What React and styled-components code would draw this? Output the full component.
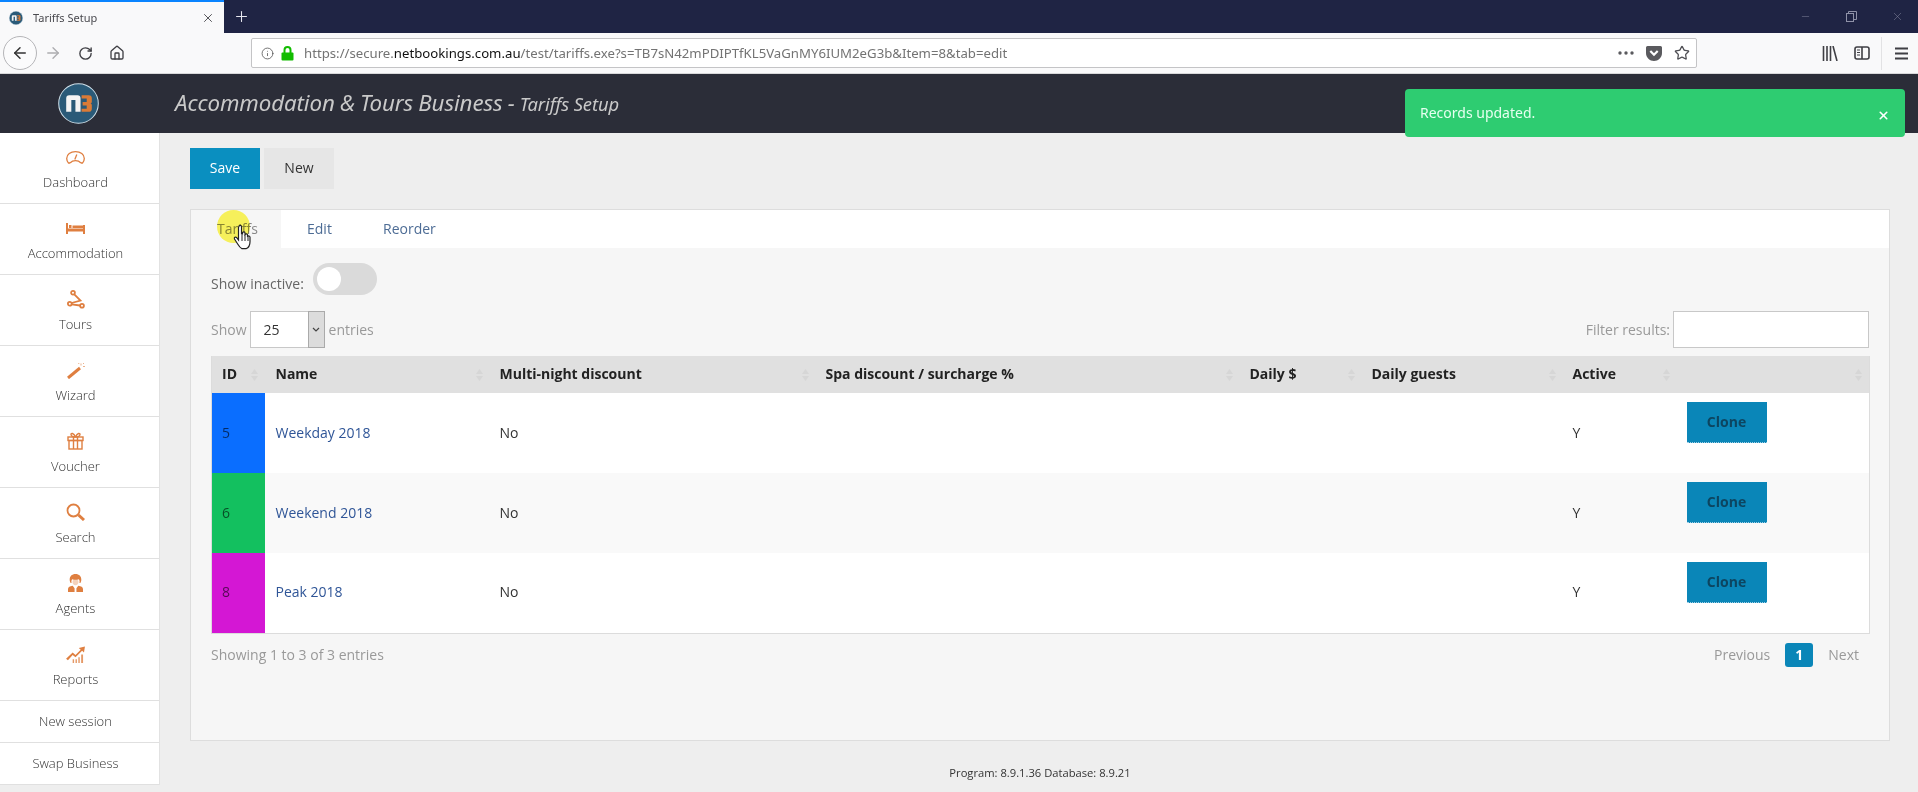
import React from 'react';
import styled, { createGlobalStyle } from 'styled-components';
import { ArrowLeft, ArrowRight, RotateCw, Home, Info, Plus, X, Minus, Star } from 'lucide-react';

const Global = createGlobalStyle`
  html, body { margin: 0; padding: 0; height: 792px; overflow: hidden; background: #eeeeee; }
  body { font-family: "Open Sans", "Liberation Sans", sans-serif; font-size: 14px; color: #333; }
  * { box-sizing: border-box; }
`;

const Page = styled.div`position: relative; width: 1918px; height: 792px; overflow: hidden; display: flex; flex-direction: column;`;

/* Browser chrome */
const TabStrip = styled.div`height: 33px; background: #1f2444; display: flex; align-items: stretch; color: #fff; flex: none;`;
const BrowserTab = styled.div`
  width: 224px; background: #f9f9fa; border-top: 2px solid #0a84ff; display: flex; align-items: center;
  padding: 0 9px 0 9px; gap: 10px; font-size: 11px; color: #4a4a4f;
  font-family: "Noto Sans", sans-serif;
`;
const TabTitle = styled.span`flex: 1;`;
const NewTab = styled.div`width: 34px; display: flex; align-items: center; justify-content: center; color: #e6e7ef;`;
const WindowControls = styled.div`margin-left: auto; margin-right: -2px; display: flex; align-items: center; color: #8f92a8;`;
const WindowBtn = styled.div`width: 46px; height: 33px; display: flex; align-items: center; justify-content: center;`;
const NavBar = styled.div`
  height: 41px; background: #f9f9fa; border-bottom: 1px solid #d8d8da; display: flex; align-items: center; flex: none; color: #4a4a4f; padding-left: 3px;
`;
const BackCircle = styled.div`
  width: 34px; height: 34px; border: 1px solid #b5b5b8; border-radius: 50%; display: flex; align-items: center; justify-content: center; color: #333; background: #fbfbfc;
`;
const NavBtn = styled.div`width: 32px; flex: none; display: flex; align-items: center; justify-content: center; color: ${p => p.$off ? '#adadb0' : '#3f3f44'};`;
const UrlBar = styled.div`
  width: 1446px; height: 30px; margin-left: 118px; background: #fff; border: 1px solid #c4c4c6; border-radius: 2px; flex: none;
  display: flex; align-items: center; gap: 7px; padding: 0 6px 0 9px; font-size: 13.2px; color: #737373; font-family: "Noto Sans", sans-serif;
`;
const UrlText = styled.span`flex: 1; margin-left: 3px; white-space: nowrap; b { font-weight: 400; color: #111; }`;
const UrlAction = styled.span`display: flex; margin-left: 5px; color: #4f4f54;`;
const LibrarySlot = styled.div`margin-left: 117px;`;
const ToolSep = styled.div`width: 1px; height: 33px; background: #e2e2e4; margin: 0 3px; flex: none;`;

/* Application */
const AppHeader = styled.header`height: 59px; background: #2b2d38; display: flex; align-items: center; flex: none;`;
const LogoCell = styled.div`width: 175px; padding-left: 58px; display: flex; align-items: center;`;
const Title = styled.h1`
  margin: 0 0 2px; font-weight: 400; font-style: italic; font-size: 22.3px; color: #c9c9c9; letter-spacing: -0.1px;
  font-family: "Noto Sans", "Open Sans", sans-serif; word-spacing: -0.5px;
`;
const SubTitle = styled.span`font-size: 18.4px; word-spacing: 0;`;
const Body = styled.div`flex: 1; display: flex; align-items: flex-start; min-height: 0;`;
const Sidebar = styled.nav`width: 160px; background: #fff; border-right: 1px solid #e2e2e2; flex: none;`;
const SideItem = styled.div`
  height: ${p => p.$small ? 42 : 71}px; border-bottom: 1px solid #e0e0e0; display: flex; flex-direction: column; align-items: center;
  justify-content: ${p => p.$small ? 'center' : 'flex-start'}; padding: ${p => p.$small ? '0 8px 2px 0' : '13px 8px 0 0'};
  font-size: 13px; font-weight: 300; color: #333; line-height: 18px;
`;
const SideIcon = styled.div`height: 22px; width: 24px; display: flex; align-items: center; justify-content: center; margin-bottom: 5px; color: #df7f40;`;

const Main = styled.main`flex: 1; padding: 15px 28px 0 30px; min-width: 0;`;
const ActionRow = styled.div`display: flex; gap: 4px; margin-bottom: 20px;`;
const ActionBtn = styled.button`
  width: 70px; height: 41px; border: 0; font: inherit; font-size: 14px; padding: 0 0 2px;
  background: ${p => p.$primary ? '#0a8fc0' : '#e6e6e6'}; color: ${p => p.$primary ? '#fff' : '#333'};
`;
const Panel = styled.section`height: 532px; background: #f6f6f6; border: 1px solid #dddddd;`;
const TabsBar = styled.div`height: 38px; background: #fff; display: flex; align-items: stretch;`;
const PanelTab = styled.div`
  display: flex; align-items: center; padding: 0 0 2px 26px; width: ${p => p.$w}px; font-size: 14px; font-weight: 400;
  background: ${p => p.$active ? '#f6f6f6' : '#fff'}; color: ${p => p.$active ? '#888' : '#4d6c95'};
`;
const PanelBody = styled.div`padding: 15px 20px 0 20px;`;
const InactiveRow = styled.div`height: 32px; display: flex; align-items: flex-start; gap: 9px; color: #666; font-size: 14px; margin-bottom: 16px;`;
const InactiveLabel = styled.span`padding-top: 11px; line-height: 20px;`;
const Toggle = styled.div`width: 64px; height: 32px; border-radius: 16px; background: #dadada; padding: 4px; display: flex;`;
const Knob = styled.div`width: 24px; height: 24px; border-radius: 50%; background: #fff;`;
const ControlRow = styled.div`display: flex; align-items: center; justify-content: space-between; height: 37px; margin-bottom: 8px; color: #999; font-size: 14px;`;
const LengthGroup = styled.div`display: flex; align-items: center; gap: 3px;`;
const EntriesLabel = styled.span`margin-left: 1px;`;
const FilterGroup = styled.div`display: flex; align-items: center; gap: 3px;`;
const SelectBox = styled.div`
  width: 75px; height: 37px; border: 1px solid #c8c8c8; background: #fff; color: #333; display: flex; align-items: center; padding-left: 13px; position: relative;
`;
const SelectArrow = styled.div`
  position: absolute; right: -1px; top: -1px; bottom: -1px; width: 17px; background: #dcdcdc; border: 1px solid #aaa; display: flex; align-items: center; justify-content: center; color: #444;
`;
const FilterInput = styled.div`width: 196px; height: 37px; border: 1px solid #c8c8c8; background: #fff;`;

const Table = styled.table`
  width: 1658px; border-collapse: collapse; table-layout: fixed; border: 1px solid #dcdcdc; border-top: 0; font-size: 14px;
  th:nth-child(2), td:nth-child(2) { padding-left: 11px; }
`;
const Th = styled.th`
  height: 37px; background: #e0e0e0; text-align: left; font-weight: 700; color: #222; padding: 0 0 2px 10px; position: relative; font-size: 14px;
`;
const SortMark = styled.svg`position: absolute; right: 7px; top: 13px; width: 7px; height: 12px; color: #d6d6d6;`;
const Row = styled.tr`height: 80px; background: ${p => p.$alt ? '#f9f9f9' : '#fff'};`;
const Td = styled.td`padding: 0 0 2px 10px; color: #333; vertical-align: middle; overflow: hidden;`;
const ColorCell = styled.td`padding: 0 0 2px 10px; background: ${p => p.$c}; color: rgba(0,0,0,.6);`;
const NameLink = styled.a`color: #2f5597; text-decoration: none;`;
const CloneCell = styled.td`padding: 9px 0 0 10px; vertical-align: top;`;
const CloneBtn = styled.button`
  width: 80px; height: 41px; border: 0; padding: 0 0 2px; background: #0a86b8; color: #0d4560; font: inherit; font-weight: 700; font-size: 14px;
  border-bottom: 1px dotted #9fd0e6;
`;
const TableFoot = styled.div`display: flex; justify-content: space-between; align-items: center; height: 24px; margin-top: 9px; color: #999; font-size: 14px;`;
const Pager = styled.div`display: flex; align-items: center; margin-right: 10px;`;
const PageCurrent = styled.span`
  width: 28px; height: 24px; background: #0a86b8; border-radius: 3px; color: #fff; font-weight: 700; display: flex; align-items: center; justify-content: center; margin: 0 15px;
`;
const Footer = styled.footer`text-align: center; font-size: 11.2px; color: #333; margin-top: 24px; line-height: 15px;`;

/* Overlays */
const Toast = styled.div`
  position: absolute; left: 1405px; top: 89px; width: 500px; height: 48px; background: #2ecc71; border-radius: 4px; color: #e6fff0;
  font-size: 14px; padding: 14px 15px; font-family: "Noto Sans", sans-serif; line-height: 20px;
`;
const ToastClose = styled.span`position: absolute; right: 15px; top: 20px; color: #fff; display: flex;`;
const Highlight = styled.div`
  position: absolute; left: 217px; top: 210px; width: 33px; height: 33px; border-radius: 50%; background: #fff95e; mix-blend-mode: multiply; pointer-events: none;
`;
const Cursor = styled.svg`position: absolute; left: 233px; top: 224px; width: 19px; height: 26px; pointer-events: none;`;

const Gauge = () => (
  <svg width="19" height="13" viewBox="0 0 19 13" fill="none" stroke="currentColor" strokeWidth="1.300">
    <path d="M4 12H2.500C1.200 10.500.7 9 .7 7.500.7 3.500 4.500.7 9.500.7s8.800 2.800 8.800 6.800c0 1.500-.5 3-1.800 4.500H15" />
    <path d="M4 12c1.500-1.500 3.200-2.300 5.500-2.300S13.500 10.500 15 12" /><path d="M8.800 8.500L10.800 3.500" />
  </svg>
);
const Bed = () => (
  <svg width="19" height="11" viewBox="0 0 19 11" fill="currentColor">
    <rect x="0" y="0" width="2" height="11" /><rect x="17" y="2" width="2" height="9" />
    <rect x="2" y="5.500" width="15" height="3" /><rect x="3" y="2" width="2.500" height="3" /><rect x="6.500" y="2.500" width="10.500" height="2.500" />
  </svg>
);
const Route = () => (
  <svg width="18" height="19" viewBox="0 0 18 19" fill="none" stroke="currentColor" strokeWidth="1.800">
    <circle cx="6" cy="2.800" r="1.900" /><circle cx="2.800" cy="13.800" r="1.900" /><circle cx="15" cy="15.800" r="1.900" />
    <path d="M7.300 4.300L13.500 10.500 4.500 13M4.700 14.300L13 15.500" />
  </svg>
);
const Wand = () => (
  <svg width="18" height="17" viewBox="0 0 18 17" fill="none" stroke="currentColor">
    <path d="M1 16L13 6" strokeWidth="3" />
    <path d="M14 1.500v2M16 4.500h2M11.500 1l.5 1M17 1l-1 1" strokeWidth="1" opacity=".6" />
  </svg>
);
const Gift = () => (
  <svg width="17" height="18" viewBox="0 0 17 18" fill="none" stroke="currentColor" strokeWidth="1.400">
    <rect x="1" y="5" width="15" height="3.500" /><rect x="2" y="8.500" width="13" height="8.500" />
    <path d="M6.500 5v12M10.500 5v12" />
    <path d="M8.500 5C6 5 4 4 4 2.500S6.500.5 8.500 5zM8.500 5c2.500 0 4.500-1 4.500-2.500S10.500.5 8.500 5z" />
  </svg>
);
const Search = () => (
  <svg width="19" height="18" viewBox="0 0 19 18" fill="none" stroke="currentColor">
    <circle cx="7.500" cy="7.500" r="6" strokeWidth="1.800" /><path d="M12.500 12l5.500 5" strokeWidth="3" />
  </svg>
);
const Agent = () => (
  <svg width="15" height="18" viewBox="0 0 16 19" fill="currentColor">
    <path d="M8 0C4 0 1.800 2.500 1.800 6c0 1.500.5 2.500 1 3.500h1C3.500 8 3.500 6.500 4.500 5.500c2 .8 5 .8 7 0 1 1 1 2.500.7 4h1c.5-1 1-2 1-3.500C14.200 2.500 12 0 8 0z" />
    <path d="M8 5.500c-2 0-3.200 1-3.200 3S6 12 8 12s3.200-1.500 3.200-3.500-1.200-3-3.200-3z" opacity=".35" />
    <path d="M0 19v-3c0-2 2-3 5-3.500L7 15v4H0zM16 19v-3c0-2-2-3-5-3.500L9 15v4h7z" />
  </svg>
);
const Reports = () => (
  <svg width="19" height="17" viewBox="0 0 20 18" fill="currentColor">
    <path d="M0 13.500L7 7l3 2.500L15.500 4 13.500 2 20 .500 19 7l-2-2-7 7-3-2.500L2 15z" />
    <path d="M7 14h1.500v4H7zM10 14h1.500v4H10zM13 12h1.500v6H13zM16 9h2v9h-2z" opacity=".8" />
  </svg>
);

const NbMark = ({ size }) => (
  <svg width={size} height={size} viewBox="0 0 40 40">
    <circle cx="20" cy="20" r="19.300" fill="#2a5a78" stroke="#cfe0ea" strokeWidth="1" />
    <path d="M8 28V15a3 3 0 0 1 3-3h8a3 3 0 0 1 3 3v13h-5V16.500h-4V28z" fill="#f4f4f4" />
    <path d="M23 12h7a3 3 0 0 1 3 3v3.500a2 2 0 0 1-1.200 1.500 2 2 0 0 1 1.200 1.500V25a3 3 0 0 1-3 3h-7v-3h5v-3h-4v-3.500h4V15h-5z" fill="#d97b37" />
  </svg>
);

const UrlDots = () => (
  <svg width="16" height="4" viewBox="0 0 16 4" fill="#5a5a5e"><circle cx="2" cy="2" r="1.700" /><circle cx="8" cy="2" r="1.700" /><circle cx="14" cy="2" r="1.700" /></svg>
);
const Pocket = () => (
  <svg width="16" height="15" viewBox="0 0 16 15"><path d="M1.500 0h13A1.500 1.500 0 0 1 16 1.500V7c0 4.500-3.800 8-8 8s-8-3.500-8-8V1.500A1.500 1.500 0 0 1 1.500 0z" fill="#5a5a5e" /><path d="M4.300 5L8 8.700 11.700 5" stroke="#fff" strokeWidth="2.200" fill="none" /></svg>
);
const Lock = () => (
  <svg width="13" height="15" viewBox="0 0 13 15"><path d="M3.500 7V4a3 3 0 0 1 6 0v3" stroke="#12bc00" strokeWidth="2" fill="none" /><rect x="0.500" y="6.500" width="12" height="8" rx="1" fill="#12bc00" /></svg>
);
const Library = () => (
  <svg width="16" height="15" viewBox="0 0 16 15" stroke="#3f3f44" strokeWidth="1.600" fill="none"><path d="M1.500 0v15M5 0v15M8.500 0v15M11 0l4 15" /></svg>
);
const SidebarGlyph = () => (
  <svg width="16" height="14" viewBox="0 0 16 14" fill="none" stroke="#3f3f44" strokeWidth="1.600"><rect x="1" y="1" width="14" height="12" rx="2" /><path d="M8 1v12" /><path d="M3 4h3M3 6.500h3M3 9h3" strokeWidth="1" /></svg>
);
const Hamburger = () => (
  <svg width="13" height="13" viewBox="0 0 13 13" stroke="#3f3f44" strokeWidth="1.800"><path d="M0 1.500h13M0 6.500h13M0 11.500h13" /></svg>
);
const Restore = () => (
  <svg width="11" height="11" viewBox="0 0 11 11" fill="none" stroke="currentColor"><rect x=".5" y="2.500" width="7" height="8" /><path d="M2.500 2.500v-2h8v8h-3" /></svg>
);
const Sort = () => (
  <SortMark viewBox="0 0 7 12" fill="currentColor"><path d="M3.500 0L7 5H0zM3.500 12L0 7h7z" /></SortMark>
);

const side = [
  ['Dashboard', Gauge], ['Accommodation', Bed], ['Tours', Route], ['Wizard', Wand],
  ['Voucher', Gift], ['Search', Search], ['Agents', Agent], ['Reports', Reports],
];
const cols = [
  ['ID', 53], ['Name', 225], ['Multi-night discount', 326], ['Spa discount / surcharge %', 424],
  ['Daily $', 122], ['Daily guests', 201], ['Active', 114], ['', 193],
];
const rows = [
  { id: 5, name: 'Weekday 2018', c: '#0a6eff' },
  { id: 6, name: 'Weekend 2018', c: '#13c05f', alt: true },
  { id: 8, name: 'Peak 2018', c: '#d417d4' },
];

export default function App() {
  return (
    <Page>
      <Global />
      <TabStrip>
        <BrowserTab>
          <NbMark size={14} />
          <TabTitle>Tariffs Setup</TabTitle>
          <X size={14} strokeWidth={1.600} />
        </BrowserTab>
        <NewTab><Plus size={17} strokeWidth={1.500} /></NewTab>
        <WindowControls>
          <WindowBtn><Minus size={11} strokeWidth={1} /></WindowBtn>
          <WindowBtn><Restore /></WindowBtn>
          <WindowBtn><X size={13} strokeWidth={0.900} /></WindowBtn>
        </WindowControls>
      </TabStrip>
      <NavBar>
        <BackCircle><ArrowLeft size={18} strokeWidth={2} /></BackCircle>
        <NavBtn $off><ArrowRight size={18} strokeWidth={1.800} /></NavBtn>
        <NavBtn><RotateCw size={15} strokeWidth={2.200} /></NavBtn>
        <NavBtn><Home size={16} strokeWidth={2} /></NavBtn>
        <UrlBar>
          <Info size={13} strokeWidth={1.500} color="#555" />
          <Lock />
          <UrlText>https://secure.<b>netbookings.com.au</b>/test/tariffs.exe?s=TB7sN42mPDIPTfKL5VaGnMY6IUM2eG3b&amp;Item=8&amp;tab=edit</UrlText>
          <UrlDots />
          <UrlAction><Pocket /></UrlAction>
          <UrlAction><Star size={16} strokeWidth={1.900} /></UrlAction>
        </UrlBar>
        <LibrarySlot><NavBtn><Library /></NavBtn></LibrarySlot>
        <NavBtn><SidebarGlyph /></NavBtn>
        <ToolSep />
        <NavBtn><Hamburger /></NavBtn>
      </NavBar>
      <AppHeader>
        <LogoCell><NbMark size={41} /></LogoCell>
        <Title>Accommodation &amp; Tours Business - <SubTitle>Tariffs Setup</SubTitle></Title>
      </AppHeader>
      <Body>
        <Sidebar>
          {side.map(([label, Icon]) => (
            <SideItem key={label}><SideIcon><Icon /></SideIcon>{label}</SideItem>
          ))}
          <SideItem $small>New session</SideItem>
          <SideItem $small>Swap Business</SideItem>
        </Sidebar>
        <Main>
          <ActionRow>
            <ActionBtn $primary>Save</ActionBtn>
            <ActionBtn>New</ActionBtn>
          </ActionRow>
          <Panel>
            <TabsBar>
              <PanelTab $active $w={90}>Tariffs</PanelTab>
              <PanelTab $w={76}>Edit</PanelTab>
              <PanelTab>Reorder</PanelTab>
            </TabsBar>
            <PanelBody>
              <InactiveRow>
                <InactiveLabel>Show inactive:</InactiveLabel>
                <Toggle><Knob /></Toggle>
              </InactiveRow>
              <ControlRow>
                <LengthGroup>
                  <span>Show</span>
                  <SelectBox>25
                    <SelectArrow>
                      <svg width="8" height="5" viewBox="0 0 8 5" fill="none" stroke="#444" strokeWidth="1.200"><path d="M1 1l3 3 3-3" /></svg>
                    </SelectArrow>
                  </SelectBox>
                  <EntriesLabel>entries</EntriesLabel>
                </LengthGroup>
                <FilterGroup>
                  <span>Filter results:</span>
                  <FilterInput />
                </FilterGroup>
              </ControlRow>
              <Table>
                <colgroup>{cols.map(([, w], i) => <col key={i} width={w} />)}</colgroup>
                <thead>
                  <tr>{cols.map(([t], i) => <Th key={i}>{t}<Sort /></Th>)}</tr>
                </thead>
                <tbody>
                  {rows.map(r => (
                    <Row key={r.id} $alt={r.alt}>
                      <ColorCell $c={r.c}>{r.id}</ColorCell>
                      <Td><NameLink>{r.name}</NameLink></Td>
                      <Td>No</Td>
                      <Td /><Td /><Td />
                      <Td>Y</Td>
                      <CloneCell><CloneBtn>Clone</CloneBtn></CloneCell>
                    </Row>
                  ))}
                </tbody>
              </Table>
              <TableFoot>
                <span>Showing 1 to 3 of 3 entries</span>
                <Pager>
                  <span>Previous</span>
                  <PageCurrent>1</PageCurrent>
                  <span>Next</span>
                </Pager>
              </TableFoot>
            </PanelBody>
          </Panel>
          <Footer>Program: 8.9.1.36 Database: 8.9.21</Footer>
        </Main>
      </Body>
      <Toast>
        Records updated.
        <ToastClose><X size={13} strokeWidth={3} /></ToastClose>
      </Toast>
      <Highlight />
      <Cursor viewBox="0 0 19 26">
        <path d="M6 2c1-1 2.500-1 2.500 1v7l1 .1V8.500c1-1 2.500-1 2.500.500v1.500c1-1 2.500-.7 2.500.700v1c1-.7 2.500-.300 2.500 1v4.500c0 3-1.500 6-4 7H9c-2-1-3-2.500-4.500-5L1.500 15c-.7-1.500 1-2.500 2-1.500L5.500 16V3.500z" fill="#fff" stroke="#222" strokeWidth="1.200" />
        <path d="M9 11v6M12 11v6M15 12v5" stroke="#222" strokeWidth="1" />
      </Cursor>
    </Page>
  );
}
